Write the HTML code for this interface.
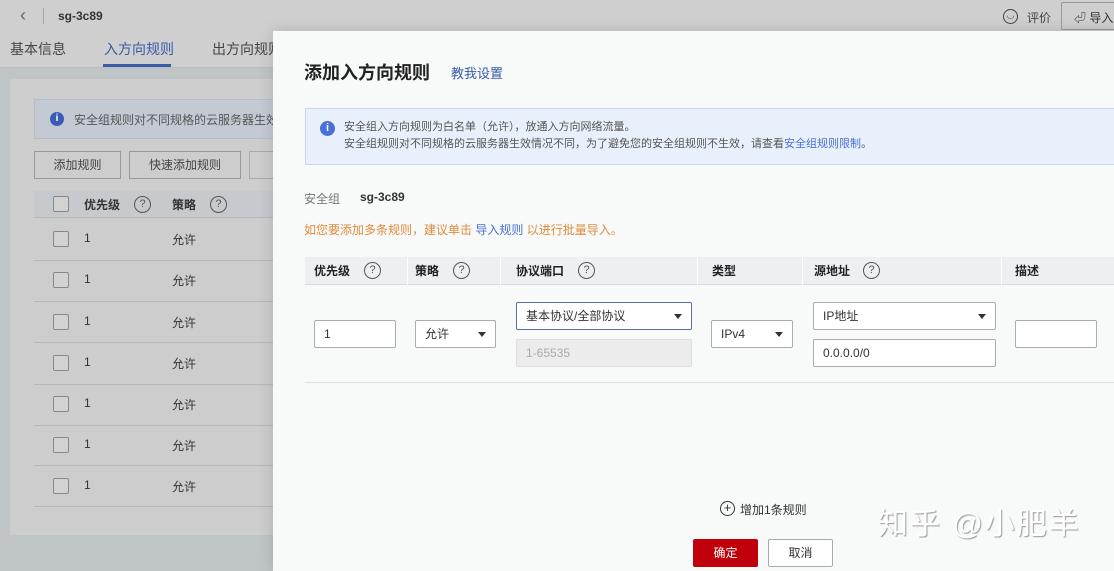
<!DOCTYPE html>
<html><head><meta charset="utf-8"><style>
*{margin:0;padding:0;box-sizing:border-box}
body{width:1114px;height:567px;overflow:hidden;position:relative;background:#bfc5c6;font-family:"Liberation Sans","Noto Sans CJK SC",sans-serif;font-size:12px;color:#333}
.abs{position:absolute}
.top{left:0;top:0;width:1114px;height:68px;background:#cfcfcf;border-bottom:1px solid #b8bec0}
.panel{left:10px;top:79px;width:270px;height:456px;background:#cdcdcd}
.q{display:inline-block;width:17px;height:17px;border:1px solid #555;border-radius:50%;text-align:center;line-height:15px;font-size:11px;color:#555}
.cb{width:16px;height:16px;border:1px solid #888;border-radius:2px;background:#d2d2d2}
.modal{left:273px;top:31px;width:850px;height:540px;background:#f7faf9;box-shadow:0 0 14px rgba(0,0,0,.15)}
.inp{position:absolute;border:1px solid #a9acb0;background:#fff;border-radius:2px;font-size:12px;color:#333;padding-left:9px;line-height:26px;height:28px}
.arr{position:absolute;right:9px;top:11px;width:0;height:0;border-left:4px solid transparent;border-right:4px solid transparent;border-top:5px solid #333}
.ln{position:absolute;left:34px;width:246px;height:1px;background:#b8b8b8}
</style></head><body>
<div class="abs top">
 <div class="abs" style="left:20px;top:5px;font-size:18px;color:#666">&#8249;</div>
 <div class="abs" style="left:43px;top:8px;width:1px;height:16px;background:#aaa"></div>
 <div class="abs" style="left:58px;top:9px;font-weight:bold;font-size:12px;color:#333">sg-3c89</div>
 <div class="abs" style="left:10px;top:39px;font-size:14px;color:#444">基本信息</div>
 <div class="abs" style="left:104px;top:39px;font-size:14px;color:#3a5ba8">入方向规则</div>
 <div class="abs" style="left:103px;top:64px;width:68px;height:3px;background:#3a5ba8"></div>
 <div class="abs" style="left:212px;top:39px;font-size:14px;color:#444">出方向规则</div>
 <div class="abs" style="left:1003px;top:9px;width:15px;height:15px;border:1.3px solid #444;border-radius:50%;font-size:9px;text-align:center;line-height:11px;color:#444">◡</div>
 <div class="abs" style="left:1027px;top:9px;color:#444">评价</div>
 <div class="abs" style="left:1061px;top:2px;width:60px;height:28px;border:1px solid #999;border-radius:2px;padding:6px 0 0 12px;color:#333">⏎ 导入</div>
</div>
<div class="abs panel"></div>
<div class="abs" style="left:34px;top:99px;width:250px;height:40px;background:#c4cad4;border:1px solid #b6bdc9"></div>
<div class="abs" style="left:50px;top:112px;width:14px;height:14px;border-radius:50%;background:#3b5cb5;color:#fff;font-size:10px;text-align:center;line-height:14px;font-weight:bold">i</div>
<div class="abs" style="left:74px;top:111px;color:#555">安全组规则对不同规格的云服务器生效</div>
<div class="abs" style="left:34px;top:151px;width:87px;height:28px;border:1px solid #999;text-align:center;line-height:26px;color:#444">添加规则</div>
<div class="abs" style="left:129px;top:151px;width:112px;height:28px;border:1px solid #999;text-align:center;line-height:26px;color:#444">快速添加规则</div>
<div class="abs" style="left:249px;top:151px;width:30px;height:28px;border:1px solid #aaa"></div>
<div class="abs" style="left:34px;top:191px;width:246px;height:26px;background:#c6c9ce"></div>
<div class="abs cb" style="left:53px;top:196px"></div>
<div class="abs" style="left:84px;top:196px;font-weight:bold;color:#333">优先级</div>
<div class="abs q" style="left:134px;top:196px">?</div>
<div class="abs" style="left:172px;top:196px;font-weight:bold;color:#333">策略</div>
<div class="abs q" style="left:210px;top:196px">?</div>
<div class="ln" style="top:217px"></div>
<div class="ln" style="top:260px"></div>
<div class="ln" style="top:301px"></div>
<div class="ln" style="top:342px"></div>
<div class="ln" style="top:384px"></div>
<div class="ln" style="top:425px"></div>
<div class="ln" style="top:465px"></div>
<div class="ln" style="top:506px"></div>
<div class="abs cb" style="left:53px;top:231px"></div><div class="abs" style="left:84px;top:231px">1</div><div class="abs" style="left:172px;top:231px">允许</div>
<div class="abs cb" style="left:53px;top:272px"></div><div class="abs" style="left:84px;top:272px">1</div><div class="abs" style="left:172px;top:272px">允许</div>
<div class="abs cb" style="left:53px;top:314px"></div><div class="abs" style="left:84px;top:314px">1</div><div class="abs" style="left:172px;top:314px">允许</div>
<div class="abs cb" style="left:53px;top:355px"></div><div class="abs" style="left:84px;top:355px">1</div><div class="abs" style="left:172px;top:355px">允许</div>
<div class="abs cb" style="left:53px;top:396px"></div><div class="abs" style="left:84px;top:396px">1</div><div class="abs" style="left:172px;top:396px">允许</div>
<div class="abs cb" style="left:53px;top:437px"></div><div class="abs" style="left:84px;top:437px">1</div><div class="abs" style="left:172px;top:437px">允许</div>
<div class="abs cb" style="left:53px;top:478px"></div><div class="abs" style="left:84px;top:478px">1</div><div class="abs" style="left:172px;top:478px">允许</div>

<div class="abs modal">
 <div class="abs" style="left:31px;top:28px;font-size:18px;font-weight:bold;color:#222">添加入方向规则</div>
 <div class="abs" style="left:178px;top:32px;font-size:13px;color:#3a5ba8">教我设置</div>
 <div class="abs" style="left:32px;top:77px;width:820px;height:57px;background:#e8f0fb;border:1px solid #c8d6ef"></div>
 <div class="abs" style="left:47px;top:90px;width:15px;height:15px;border-radius:50%;background:#4a6fd6;color:#fff;font-size:11px;text-align:center;line-height:15px;font-weight:bold">i</div>
 <div class="abs" style="left:71px;top:88px;font-size:11px;color:#555;line-height:17px">安全组入方向规则为白名单（允许），放通入方向网络流量。<br>安全组规则对不同规格的云服务器生效情况不同，为了避免您的安全组规则不生效，请查看<span style="color:#4a6fd6">安全组规则限制</span>。</div>
 <div class="abs" style="left:31px;top:159px;color:#777">安全组</div>
 <div class="abs" style="left:87px;top:159px;font-weight:bold;color:#333">sg-3c89</div>
 <div class="abs" style="left:31px;top:190px;color:#e08a3c">如您要添加多条规则，建议单击 <span style="color:#4a6fd6">导入规则</span> 以进行批量导入。</div>
 <div class="abs" style="left:32px;top:226px;width:820px;height:28px;background:#edf0f3;border-bottom:1px solid #d8dce0"></div>
 <div class="abs" style="left:41px;top:226px;line-height:28px;font-weight:bold;color:#222">优先级</div><div class="abs q" style="left:91px;top:231px">?</div>
 <div class="abs" style="left:142px;top:226px;line-height:28px;font-weight:bold;color:#222">策略</div><div class="abs q" style="left:180px;top:231px">?</div>
 <div class="abs" style="left:243px;top:226px;line-height:28px;font-weight:bold;color:#222">协议端口</div><div class="abs q" style="left:305px;top:231px">?</div>
 <div class="abs" style="left:439px;top:226px;line-height:28px;font-weight:bold;color:#222">类型</div>
 <div class="abs" style="left:541px;top:226px;line-height:28px;font-weight:bold;color:#222">源地址</div><div class="abs q" style="left:590px;top:231px">?</div>
 <div class="abs" style="left:742px;top:226px;line-height:28px;font-weight:bold;color:#222">描述</div>
 <div class="abs" style="left:134px;top:226px;width:1px;height:28px;background:#fff"></div>
 <div class="abs" style="left:227px;top:226px;width:1px;height:28px;background:#fff"></div>
 <div class="abs" style="left:424px;top:226px;width:1px;height:28px;background:#fff"></div>
 <div class="abs" style="left:529px;top:226px;width:1px;height:28px;background:#fff"></div>
 <div class="abs" style="left:728px;top:226px;width:1px;height:28px;background:#fff"></div>
 <div class="inp" style="left:41px;top:289px;width:82px">1</div>
 <div class="inp" style="left:142px;top:289px;width:81px">允许<i class="arr"></i></div>
 <div class="inp" style="left:243px;top:271px;width:176px;border-color:#5a6fa8">基本协议/全部协议<i class="arr"></i></div>
 <div class="inp" style="left:243px;top:308px;width:176px;background:#ececec;border-color:#ddd;color:#aaa">1-65535</div>
 <div class="inp" style="left:438px;top:289px;width:82px">IPv4<i class="arr"></i></div>
 <div class="inp" style="left:540px;top:271px;width:183px">IP地址<i class="arr"></i></div>
 <div class="inp" style="left:540px;top:308px;width:183px">0.0.0.0/0</div>
 <div class="inp" style="left:742px;top:289px;width:82px"></div>
 <div class="abs" style="left:32px;top:351px;width:820px;height:1px;background:#dde0e3"></div>
 <div class="abs" style="left:447px;top:470px;width:15px;height:15px;border:1.5px solid #333;border-radius:50%;text-align:center;line-height:11px;font-size:13px;color:#333">+</div>
 <div class="abs" style="left:467px;top:470px;color:#333">增加1条规则</div>
 <div class="abs" style="left:420px;top:508px;width:65px;height:28px;background:#c0000b;color:#fff;text-align:center;line-height:28px;border-radius:2px">确定</div>
 <div class="abs" style="left:495px;top:508px;width:65px;height:28px;border:1px solid #aaa;background:#fff;color:#333;text-align:center;line-height:26px;border-radius:2px">取消</div>
 <div class="abs" style="left:605px;top:468px;font-size:30px;color:#fff;text-shadow:1px 1px 1px #999;letter-spacing:2px">知乎 @小肥羊</div>
</div>
</body></html>
